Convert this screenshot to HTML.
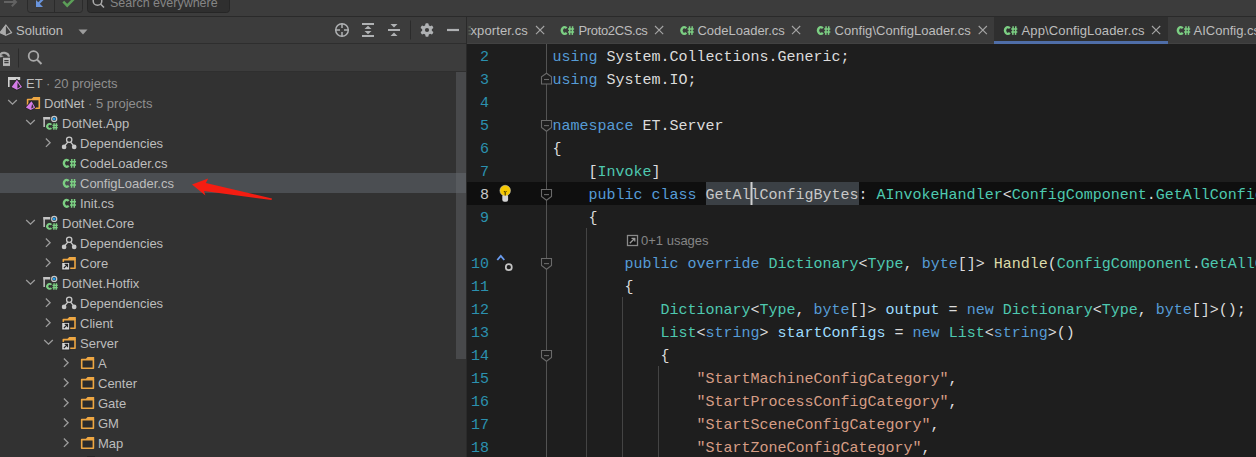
<!DOCTYPE html>
<html><head><meta charset="utf-8"><style>
*{box-sizing:border-box}
html,body{margin:0;padding:0}
body{width:1256px;height:457px;overflow:hidden;position:relative;background:#1e1e1e;font-family:"Liberation Sans",sans-serif;font-size:13px;color:#bbbbbb}
.a{position:absolute}
.row{position:absolute;left:0;width:456px;height:20px;white-space:pre;line-height:20px}
.tt{position:absolute;top:0;color:#bdbdbd}
.dim{color:#8f8f8f}
.code{font-family:"Liberation Mono",monospace;font-size:15px;white-space:pre;position:absolute;left:552px;height:23px;line-height:23px;color:#dcdcdc}
.ln{font-family:"Liberation Mono",monospace;font-size:15px;position:absolute;left:460px;width:29px;text-align:right;height:23px;line-height:23px;color:#2b91af}
.k{color:#569cd6}.ty{color:#4ec9b0}.s{color:#d69d85}.m{color:#dcdcaa}.v{color:#9cdcfe}
.tab{position:absolute;top:17px;height:26px;white-space:pre}
.tabt{position:absolute;top:1px;line-height:26px;color:#bdbdbd}
.ic{position:absolute}
</style></head><body>
<div class="a" style="left:0px;top:0px;width:1256px;height:16px;background:#3c3c3c;"></div>
<div class="a" style="left:0px;top:16px;width:1256px;height:1px;background:#2a2a2a;"></div>
<div class="a" style="left:0px;top:17px;width:466px;height:26px;background:#3c3c3c;"></div>
<div class="a" style="left:0px;top:43px;width:466px;height:1px;background:#2e2e2e;"></div>
<div class="a" style="left:0px;top:44px;width:466px;height:28px;background:#3c3c3c;"></div>
<div class="a" style="left:0px;top:71px;width:466px;height:1px;background:#2f2f2f;"></div>
<div class="a" style="left:0px;top:72px;width:466px;height:385px;background:#323232;"></div>
<div class="a" style="left:466px;top:17px;width:1px;height:440px;background:#2a2a2a;"></div>
<div class="a" style="left:467px;top:17px;width:789px;height:27px;background:#3b3b3b;"></div>
<div class="a" style="left:467px;top:44px;width:789px;height:413px;background:#1e1e1e;"></div>
<svg class="ic" style="left:0;top:0" width="1256" height="16" viewBox="0 0 1256 16"><path d="M4 2H16M11.8 -2.2L16 2L11.8 6.2" stroke="#626262" stroke-width="2" fill="none"/><rect x="27.5" y="-4" width="55" height="16.5" rx="3" fill="#3c3c3c" stroke="#2b2b2b"/><line x1="54.5" y1="0" x2="54.5" y2="12" stroke="#2b2b2b"/><path d="M44 -2L37.5 4.5" stroke="#6994dc" stroke-width="2.2"/><path d="M36 0V7H43Z" fill="#6994dc"/><path d="M63.3 1.6L67.2 5.6L74.5 -1.7" stroke="#5c9f58" stroke-width="2.5" fill="none"/><rect x="87.5" y="-4" width="142" height="16.5" rx="3" fill="#2f2f2f" stroke="#262626"/><circle cx="97.5" cy="1" r="4.3" stroke="#a9a9a9" stroke-width="1.5" fill="none"/><path d="M100.5 4L104 7.5" stroke="#a9a9a9" stroke-width="1.6"/></svg>
<div class="a" style="left:110px;top:-5px;line-height:16px;font-size:12.5px;color:#858585;white-space:pre">Search everywhere</div>
<svg class="ic" style="left:0;top:17px" width="466" height="55" viewBox="0 17 466 55"><path d="M5.9 25L0.2 32.6L5.9 35.2L11.6 32.6Z" fill="none" stroke="#ababab" stroke-width="1.2" stroke-linejoin="round"/><path d="M5.9 24.4L-0.3 32.6L5.9 35.8Z" fill="#ababab"/><path d="M78.5 29.5H87.5L83 34.5Z" fill="#9c9c9c"/><circle cx="342" cy="30" r="6.3" stroke="#afb1b3" stroke-width="1.5" fill="none"/><path d="M342 23.5V28M342 32V36.5M335.5 30H340M344 30H348.5" stroke="#afb1b3" stroke-width="1.5"/><path d="M362 24H374M362 36H374" stroke="#afb1b3" stroke-width="2"/><path d="M364.5 29L368 25.8L371.5 29ZM364.5 31L368 34.2L371.5 31Z" fill="#afb1b3"/><path d="M388 30H400" stroke="#afb1b3" stroke-width="2"/><path d="M390.5 24H397.5L394 27.5ZM390.5 36H397.5L394 32.5Z" fill="#afb1b3"/><path d="M410.5 20.5V39.5" stroke="#2b2b2b" stroke-width="1"/><g transform="translate(427,30)" fill="#afb1b3"><circle r="4.9"/><rect x="-1.6" y="-6.7" width="3.2" height="3.4" rx="0.9" transform="rotate(0)"/><rect x="-1.6" y="-6.7" width="3.2" height="3.4" rx="0.9" transform="rotate(60)"/><rect x="-1.6" y="-6.7" width="3.2" height="3.4" rx="0.9" transform="rotate(120)"/><rect x="-1.6" y="-6.7" width="3.2" height="3.4" rx="0.9" transform="rotate(180)"/><rect x="-1.6" y="-6.7" width="3.2" height="3.4" rx="0.9" transform="rotate(240)"/><rect x="-1.6" y="-6.7" width="3.2" height="3.4" rx="0.9" transform="rotate(300)"/><circle r="2.1" fill="#3c3c3c"/></g><path d="M447 30H459" stroke="#afb1b3" stroke-width="2.2"/><path d="M-0.5 56A4.9 4.9 0 0 1 9 57.5" stroke="#a9a9a9" stroke-width="2.1" fill="none"/><path d="M-1 61.5A2.6 2.6 0 0 1 3.2 57.2" stroke="#a9a9a9" stroke-width="1.6" fill="none"/><rect x="2.5" y="57.2" width="8" height="9.2" fill="#b8b8b8" stroke="#3c3c3c" stroke-width="1"/><path d="M4.3 60.6H8.6M4.3 62.6H8.6" stroke="#3c3c3c" stroke-width="1.1"/><path d="M18.5 48.5V67.5" stroke="#2b2b2b"/><circle cx="33.5" cy="56" r="4.8" stroke="#a9a9a9" stroke-width="1.8" fill="none"/><path d="M37 59.5L41.5 64" stroke="#a9a9a9" stroke-width="2"/></svg>
<div class="a" style="left:16px;top:18px;line-height:26px;color:#bdbdbd;white-space:pre">Solution</div>
<div class="a" style="left:0px;top:173px;width:466px;height:20px;background:#4b4e52;"></div>
<div class="a" style="left:456px;top:72px;width:10px;height:287px;background:rgba(108,110,116,0.38);"></div>
<div class="row" style="top:74px"><span class="tt" style="left:26px">ET<span class="dim"> · 20 projects</span></span></div>
<div class="row" style="top:94px"><span class="tt" style="left:44px">DotNet<span class="dim"> · 5 projects</span></span></div>
<div class="row" style="top:114px"><span class="tt" style="left:62px">DotNet.App</span></div>
<div class="row" style="top:134px"><span class="tt" style="left:80px">Dependencies</span></div>
<div class="row" style="top:154px"><span class="tt" style="left:80px">CodeLoader.cs</span></div>
<div class="row" style="top:174px"><span class="tt" style="left:80px">ConfigLoader.cs</span></div>
<div class="row" style="top:194px"><span class="tt" style="left:80px">Init.cs</span></div>
<div class="row" style="top:214px"><span class="tt" style="left:62px">DotNet.Core</span></div>
<div class="row" style="top:234px"><span class="tt" style="left:80px">Dependencies</span></div>
<div class="row" style="top:254px"><span class="tt" style="left:80px">Core</span></div>
<div class="row" style="top:274px"><span class="tt" style="left:62px">DotNet.Hotfix</span></div>
<div class="row" style="top:294px"><span class="tt" style="left:80px">Dependencies</span></div>
<div class="row" style="top:314px"><span class="tt" style="left:80px">Client</span></div>
<div class="row" style="top:334px"><span class="tt" style="left:80px">Server</span></div>
<div class="row" style="top:354px"><span class="tt" style="left:98px">A</span></div>
<div class="row" style="top:374px"><span class="tt" style="left:98px">Center</span></div>
<div class="row" style="top:394px"><span class="tt" style="left:98px">Gate</span></div>
<div class="row" style="top:414px"><span class="tt" style="left:98px">GM</span></div>
<div class="row" style="top:434px"><span class="tt" style="left:98px">Map</span></div>
<div class="row" style="top:454px"><span class="tt" style="left:98px">Model</span></div>
<svg class="ic" style="left:0;top:72px" width="456" height="385" viewBox="0 72 456 385"><rect x="8" y="77" width="12.2" height="3" fill="#d0d0d0"/><rect x="8" y="77" width="1.6" height="10" fill="#d0d0d0"/><path d="M16.9 79.7L11.6 87.1L16.9 89.8L22.0 87.1Z" fill="#262626" stroke="#262626" stroke-width="1.6" stroke-linejoin="round"/><path d="M16.9 79.7L11.6 87.1L16.9 89.8L22.0 87.1Z" fill="#d47ce6"/><path d="M17.5 82.2L17.4 88.39999999999999L20.4 86.8Z" fill="#2a2a2a"/><path d="M8.2 100L12.5 104.2L16.8 100" stroke="#9c9c9c" stroke-width="1.3" fill="none"/><path d="M27.6 99.5H39.3V108.2H27.6Z" fill="#2b2b2b" stroke="#eea743" stroke-width="1.6" stroke-linejoin="round"/><path d="M31.6 99.1L33.4 96.9H40.1V99.7H31.6Z" fill="#eea743"/><path d="M31.5 101.2L25.9 107.6L30.7 109.9L35.2 107.6Z" fill="#262626" stroke="#262626" stroke-width="1.6" stroke-linejoin="round"/><path d="M31.5 101.2L25.9 107.6L30.7 109.9L35.2 107.6Z" fill="#d47ce6"/><path d="M32.1 103.7L31.2 108.5L33.6 107.3Z" fill="#2a2a2a"/><path d="M26.2 120L30.5 124.2L34.8 120" stroke="#9c9c9c" stroke-width="1.3" fill="none"/><rect x="43.4" y="117" width="6.8" height="2.5" fill="#c4c4c4"/><rect x="43.4" y="117" width="1.5" height="10" fill="#c4c4c4"/><circle cx="54.2" cy="118.9" r="2.5" fill="#2b2b2b" stroke="#c8c8c8" stroke-width="1.3"/><circle cx="54.2" cy="118.9" r="1.4" fill="#1ea0f5"/><g transform="translate(46.2,123) scale(0.86,0.74)" fill="none" stroke="#7ccf83"><path d="M5.9 2.3A2.7 3.4 0 1 0 5.9 6.9" stroke-width="2.53"/><path d="M9.2 0.4L8.9 9M11.9 0.4L11.6 9M7.3 3.1H13.4M7.3 6.2H13.4" stroke-width="1.6500000000000001"/></g><path d="M45.900000000000006 138.5L50.1 142.7L45.900000000000006 146.9" stroke="#9c9c9c" stroke-width="1.3" fill="none"/><circle cx="69.2" cy="139.7" r="2.65" stroke="#c8c8c8" stroke-width="1.3" fill="none"/><path d="M67.9 142L64.4 146.2M70.5 142L74.0 146.2" stroke="#c8c8c8" stroke-width="1.2"/><circle cx="64.10000000000001" cy="146.9" r="2.35" fill="#c8c8c8"/><circle cx="74.2" cy="146.9" r="2.35" fill="#c8c8c8"/><g transform="translate(62.8,158.6) scale(0.985,1.02)" fill="none" stroke="#7ccf83"><path d="M5.9 2.3A2.7 3.4 0 1 0 5.9 6.9" stroke-width="2.3"/><path d="M9.2 0.4L8.9 9M11.9 0.4L11.6 9M7.3 3.1H13.4M7.3 6.2H13.4" stroke-width="1.5"/></g><g transform="translate(62.8,178.6) scale(0.985,1.02)" fill="none" stroke="#7ccf83"><path d="M5.9 2.3A2.7 3.4 0 1 0 5.9 6.9" stroke-width="2.3"/><path d="M9.2 0.4L8.9 9M11.9 0.4L11.6 9M7.3 3.1H13.4M7.3 6.2H13.4" stroke-width="1.5"/></g><g transform="translate(62.8,198.6) scale(0.985,1.02)" fill="none" stroke="#7ccf83"><path d="M5.9 2.3A2.7 3.4 0 1 0 5.9 6.9" stroke-width="2.3"/><path d="M9.2 0.4L8.9 9M11.9 0.4L11.6 9M7.3 3.1H13.4M7.3 6.2H13.4" stroke-width="1.5"/></g><path d="M26.2 220L30.5 224.2L34.8 220" stroke="#9c9c9c" stroke-width="1.3" fill="none"/><rect x="43.4" y="217" width="6.8" height="2.5" fill="#c4c4c4"/><rect x="43.4" y="217" width="1.5" height="10" fill="#c4c4c4"/><circle cx="54.2" cy="218.9" r="2.5" fill="#2b2b2b" stroke="#c8c8c8" stroke-width="1.3"/><circle cx="54.2" cy="218.9" r="1.4" fill="#1ea0f5"/><g transform="translate(46.2,223) scale(0.86,0.74)" fill="none" stroke="#7ccf83"><path d="M5.9 2.3A2.7 3.4 0 1 0 5.9 6.9" stroke-width="2.53"/><path d="M9.2 0.4L8.9 9M11.9 0.4L11.6 9M7.3 3.1H13.4M7.3 6.2H13.4" stroke-width="1.6500000000000001"/></g><path d="M45.900000000000006 238.5L50.1 242.7L45.900000000000006 246.9" stroke="#9c9c9c" stroke-width="1.3" fill="none"/><circle cx="69.2" cy="239.7" r="2.65" stroke="#c8c8c8" stroke-width="1.3" fill="none"/><path d="M67.9 242L64.4 246.2M70.5 242L74.0 246.2" stroke="#c8c8c8" stroke-width="1.2"/><circle cx="64.10000000000001" cy="246.9" r="2.35" fill="#c8c8c8"/><circle cx="74.2" cy="246.9" r="2.35" fill="#c8c8c8"/><path d="M45.900000000000006 258.5L50.1 262.7L45.900000000000006 266.9" stroke="#9c9c9c" stroke-width="1.3" fill="none"/><path d="M63.3 259.6H75.0V268.2H63.3Z" fill="#2b2b2b" stroke="#eea743" stroke-width="1.6" stroke-linejoin="round"/><path d="M67.3 259.2L69.1 257H75.8V259.8H67.3Z" fill="#eea743"/><rect x="61.7" y="262.4" width="8" height="7.6" fill="#d6d6d6" stroke="#262626" stroke-width="1"/><path d="M63.9 268L67.5 264.4M64.7 264.4H67.5V267.2" stroke="#262626" stroke-width="1.2" fill="none"/><path d="M26.2 280L30.5 284.2L34.8 280" stroke="#9c9c9c" stroke-width="1.3" fill="none"/><rect x="43.4" y="277" width="6.8" height="2.5" fill="#c4c4c4"/><rect x="43.4" y="277" width="1.5" height="10" fill="#c4c4c4"/><circle cx="54.2" cy="278.9" r="2.5" fill="#2b2b2b" stroke="#c8c8c8" stroke-width="1.3"/><circle cx="54.2" cy="278.9" r="1.4" fill="#1ea0f5"/><g transform="translate(46.2,283) scale(0.86,0.74)" fill="none" stroke="#7ccf83"><path d="M5.9 2.3A2.7 3.4 0 1 0 5.9 6.9" stroke-width="2.53"/><path d="M9.2 0.4L8.9 9M11.9 0.4L11.6 9M7.3 3.1H13.4M7.3 6.2H13.4" stroke-width="1.6500000000000001"/></g><path d="M45.900000000000006 298.5L50.1 302.7L45.900000000000006 306.9" stroke="#9c9c9c" stroke-width="1.3" fill="none"/><circle cx="69.2" cy="299.7" r="2.65" stroke="#c8c8c8" stroke-width="1.3" fill="none"/><path d="M67.9 302L64.4 306.2M70.5 302L74.0 306.2" stroke="#c8c8c8" stroke-width="1.2"/><circle cx="64.10000000000001" cy="306.9" r="2.35" fill="#c8c8c8"/><circle cx="74.2" cy="306.9" r="2.35" fill="#c8c8c8"/><path d="M45.900000000000006 318.5L50.1 322.7L45.900000000000006 326.9" stroke="#9c9c9c" stroke-width="1.3" fill="none"/><path d="M63.3 319.6H75.0V328.2H63.3Z" fill="#2b2b2b" stroke="#eea743" stroke-width="1.6" stroke-linejoin="round"/><path d="M67.3 319.2L69.1 317H75.8V319.8H67.3Z" fill="#eea743"/><rect x="61.7" y="322.4" width="8" height="7.6" fill="#d6d6d6" stroke="#262626" stroke-width="1"/><path d="M63.9 328L67.5 324.4M64.7 324.4H67.5V327.2" stroke="#262626" stroke-width="1.2" fill="none"/><path d="M44.2 340L48.5 344.2L52.8 340" stroke="#9c9c9c" stroke-width="1.3" fill="none"/><path d="M63.3 339.6H75.0V348.2H63.3Z" fill="#2b2b2b" stroke="#eea743" stroke-width="1.6" stroke-linejoin="round"/><path d="M67.3 339.2L69.1 337H75.8V339.8H67.3Z" fill="#eea743"/><rect x="61.7" y="342.4" width="8" height="7.6" fill="#d6d6d6" stroke="#262626" stroke-width="1"/><path d="M63.9 348L67.5 344.4M64.7 344.4H67.5V347.2" stroke="#262626" stroke-width="1.2" fill="none"/><path d="M63.900000000000006 358.5L68.10000000000001 362.7L63.900000000000006 366.9" stroke="#9c9c9c" stroke-width="1.3" fill="none"/><path d="M81.7 359.6H93.4V368.2H81.7Z" fill="#2b2b2b" stroke="#eea743" stroke-width="1.6" stroke-linejoin="round"/><path d="M85.7 359.2L87.5 357H94.2V359.8H85.7Z" fill="#eea743"/><path d="M63.900000000000006 378.5L68.10000000000001 382.7L63.900000000000006 386.9" stroke="#9c9c9c" stroke-width="1.3" fill="none"/><path d="M81.7 379.6H93.4V388.2H81.7Z" fill="#2b2b2b" stroke="#eea743" stroke-width="1.6" stroke-linejoin="round"/><path d="M85.7 379.2L87.5 377H94.2V379.8H85.7Z" fill="#eea743"/><path d="M63.900000000000006 398.5L68.10000000000001 402.7L63.900000000000006 406.9" stroke="#9c9c9c" stroke-width="1.3" fill="none"/><path d="M81.7 399.6H93.4V408.2H81.7Z" fill="#2b2b2b" stroke="#eea743" stroke-width="1.6" stroke-linejoin="round"/><path d="M85.7 399.2L87.5 397H94.2V399.8H85.7Z" fill="#eea743"/><path d="M63.900000000000006 418.5L68.10000000000001 422.7L63.900000000000006 426.9" stroke="#9c9c9c" stroke-width="1.3" fill="none"/><path d="M81.7 419.6H93.4V428.2H81.7Z" fill="#2b2b2b" stroke="#eea743" stroke-width="1.6" stroke-linejoin="round"/><path d="M85.7 419.2L87.5 417H94.2V419.8H85.7Z" fill="#eea743"/><path d="M63.900000000000006 438.5L68.10000000000001 442.7L63.900000000000006 446.9" stroke="#9c9c9c" stroke-width="1.3" fill="none"/><path d="M81.7 439.6H93.4V448.2H81.7Z" fill="#2b2b2b" stroke="#eea743" stroke-width="1.6" stroke-linejoin="round"/><path d="M85.7 439.2L87.5 437H94.2V439.8H85.7Z" fill="#eea743"/><path d="M63.900000000000006 458.5L68.10000000000001 462.7L63.900000000000006 466.9" stroke="#9c9c9c" stroke-width="1.3" fill="none"/><path d="M81.7 459.6H93.4V468.2H81.7Z" fill="#2b2b2b" stroke="#eea743" stroke-width="1.6" stroke-linejoin="round"/><path d="M85.7 459.2L87.5 457H94.2V459.8H85.7Z" fill="#eea743"/><path d="M192 184.5L208.2 178.6L205.9 183L272 198.6L271.5 200L204 191.1L205.4 195.6Z" fill="#f41d12"/><path d="M87 456.5H95" stroke="#262626" stroke-width="1"/></svg>
<div class="a" style="left:467px;top:43px;width:789px;height:1px;background:#424242;"></div>
<div class="a" style="left:994px;top:17px;width:174px;height:27px;background:#2f2f2f;"></div>
<div class="a" style="left:994px;top:41px;width:174px;height:3px;background:#4f6ea8;"></div>
<div class="tab" style="left:470.5px"><span class="tabt" style="letter-spacing:0.1px">xporter.cs</span></div>
<div class="tab" style="left:578.5px"><span class="tabt" style="letter-spacing:-0.36px">Proto2CS.cs</span></div>
<div class="tab" style="left:697.4px"><span class="tabt" style="letter-spacing:0px">CodeLoader.cs</span></div>
<div class="tab" style="left:834.5px"><span class="tabt" style="letter-spacing:0.05px">Config\ConfigLoader.cs</span></div>
<div class="tab" style="left:1021.5px"><span class="tabt" style="letter-spacing:0.13px">App\ConfigLoader.cs</span></div>
<div class="tab" style="left:1193.5px"><span class="tabt" style="letter-spacing:0px">AIConfig.cs</span></div>
<svg class="ic" style="left:467px;top:17px" width="789" height="27" viewBox="467 17 789 27"><path d="M536 26L544.2 34.2M544.2 26L536 34.2" stroke="#a5a5a5" stroke-width="1.1"/><g transform="translate(560.6999999999999,25.9) scale(1.0,1.0)" fill="none" stroke="#7ccf83"><path d="M5.9 2.3A2.7 3.4 0 1 0 5.9 6.9" stroke-width="2.3"/><path d="M9.2 0.4L8.9 9M11.9 0.4L11.6 9M7.3 3.1H13.4M7.3 6.2H13.4" stroke-width="1.5"/></g><path d="M655 26L663.2 34.2M663.2 26L655 34.2" stroke="#a5a5a5" stroke-width="1.1"/><g transform="translate(680.3,25.9) scale(1.0,1.0)" fill="none" stroke="#7ccf83"><path d="M5.9 2.3A2.7 3.4 0 1 0 5.9 6.9" stroke-width="2.3"/><path d="M9.2 0.4L8.9 9M11.9 0.4L11.6 9M7.3 3.1H13.4M7.3 6.2H13.4" stroke-width="1.5"/></g><path d="M792 26L800.2 34.2M800.2 26L792 34.2" stroke="#a5a5a5" stroke-width="1.1"/><g transform="translate(816.9,25.9) scale(1.0,1.0)" fill="none" stroke="#7ccf83"><path d="M5.9 2.3A2.7 3.4 0 1 0 5.9 6.9" stroke-width="2.3"/><path d="M9.2 0.4L8.9 9M11.9 0.4L11.6 9M7.3 3.1H13.4M7.3 6.2H13.4" stroke-width="1.5"/></g><path d="M978.7 26L986.9000000000001 34.2M986.9000000000001 26L978.7 34.2" stroke="#a5a5a5" stroke-width="1.1"/><g transform="translate(1003.9,25.9) scale(1.0,1.0)" fill="none" stroke="#7ccf83"><path d="M5.9 2.3A2.7 3.4 0 1 0 5.9 6.9" stroke-width="2.3"/><path d="M9.2 0.4L8.9 9M11.9 0.4L11.6 9M7.3 3.1H13.4M7.3 6.2H13.4" stroke-width="1.5"/></g><path d="M1152 26L1160.2 34.2M1160.2 26L1152 34.2" stroke="#a5a5a5" stroke-width="1.1"/><g transform="translate(1176.8,25.9) scale(1.0,1.0)" fill="none" stroke="#7ccf83"><path d="M5.9 2.3A2.7 3.4 0 1 0 5.9 6.9" stroke-width="2.3"/><path d="M9.2 0.4L8.9 9M11.9 0.4L11.6 9M7.3 3.1H13.4M7.3 6.2H13.4" stroke-width="1.5"/></g><path d="M468.5 27H471M468.5 30.8H470.8M468.5 34H471" stroke="#6f7a6a" stroke-width="1"/></svg>
<div class="a" style="left:467px;top:182px;width:789px;height:23px;background:#0f0f0f;"></div>
<div class="a" style="left:705.5px;top:182px;width:153px;height:23px;background:#3b4045;"></div>
<div class="ln" style="top:46px;color:#2b91af">2</div>
<div class="code" style="top:46px;left:552.5px"><span class="k">using</span> System.Collections.Generic;</div>
<div class="ln" style="top:69px;color:#2b91af">3</div>
<div class="code" style="top:69px;left:552.5px"><span class="k">using</span> System.IO;</div>
<div class="ln" style="top:92px;color:#2b91af">4</div>
<div class="ln" style="top:115px;color:#2b91af">5</div>
<div class="code" style="top:115px;left:552.5px"><span class="k">namespace</span> ET.Server</div>
<div class="ln" style="top:138px;color:#2b91af">6</div>
<div class="code" style="top:138px;left:552.5px">{</div>
<div class="ln" style="top:161px;color:#2b91af">7</div>
<div class="code" style="top:161px;left:588.5px">[<span class="ty">Invoke</span>]</div>
<div class="ln" style="top:184px;color:#c8c8c8">8</div>
<div class="code" style="top:184px;left:588.5px"><span class="k">public</span> <span class="k">class</span> <span style="color:#c8c8c8">GetAllConfigBytes</span>: <span class="ty">AInvokeHandler</span>&lt;<span class="ty">ConfigComponent</span>.<span class="ty">GetAllConfigBytes</span>, <span class="ty">Dictionary</span>&lt;<span class="ty">Type</span>, <span class="k">byte</span>[]&gt;&gt;</div>
<div class="ln" style="top:207px;color:#2b91af">9</div>
<div class="code" style="top:207px;left:588.5px">{</div>
<div class="ln" style="top:253px;color:#2b91af">10</div>
<div class="code" style="top:253px;left:624.5px"><span class="k">public</span> <span class="k">override</span> <span class="ty">Dictionary</span>&lt;<span class="ty">Type</span>, <span class="k">byte</span>[]&gt; <span class="m">Handle</span>(<span class="ty">ConfigComponent</span>.<span class="ty">GetAllConfigBytes</span> args)</div>
<div class="ln" style="top:276px;color:#2b91af">11</div>
<div class="code" style="top:276px;left:624.5px">{</div>
<div class="ln" style="top:299px;color:#2b91af">12</div>
<div class="code" style="top:299px;left:660.5px"><span class="ty">Dictionary</span>&lt;<span class="ty">Type</span>, <span class="k">byte</span>[]&gt; <span class="v">output</span> = <span class="k">new</span> <span class="ty">Dictionary</span>&lt;<span class="ty">Type</span>, <span class="k">byte</span>[]&gt;();</div>
<div class="ln" style="top:322px;color:#2b91af">13</div>
<div class="code" style="top:322px;left:660.5px"><span class="ty">List</span>&lt;<span class="k">string</span>&gt; <span class="v">startConfigs</span> = <span class="k">new</span> <span class="ty">List</span>&lt;<span class="k">string</span>&gt;()</div>
<div class="ln" style="top:345px;color:#2b91af">14</div>
<div class="code" style="top:345px;left:660.5px">{</div>
<div class="ln" style="top:368px;color:#2b91af">15</div>
<div class="code" style="top:368px;left:696.5px"><span class="s">"StartMachineConfigCategory"</span>,</div>
<div class="ln" style="top:391px;color:#2b91af">16</div>
<div class="code" style="top:391px;left:696.5px"><span class="s">"StartProcessConfigCategory"</span>,</div>
<div class="ln" style="top:414px;color:#2b91af">17</div>
<div class="code" style="top:414px;left:696.5px"><span class="s">"StartSceneConfigCategory"</span>,</div>
<div class="ln" style="top:437px;color:#2b91af">18</div>
<div class="code" style="top:437px;left:696.5px"><span class="s">"StartZoneConfigCategory"</span>,</div>
<div class="a" style="left:641px;top:229px;line-height:23px;font-size:13px;color:#858585;white-space:pre">0+1 usages</div>
<svg class="ic" style="left:467px;top:43px" width="789" height="414" viewBox="467 43 789 414"><path d="M546.5 44V457" stroke="#535353" stroke-width="1"/><path d="M586.5 228V457M622.5 297V457M658.5 366V457" stroke="#444444" stroke-width="1"/><path d="M541.5 84H551.5V76.8L546.5 73.2L541.5 76.8Z" fill="#1e1e1e" stroke="#6a6a6a" stroke-width="1.1"/><path d="M544 79.5H549" stroke="#6a6a6a" stroke-width="1.1"/><path d="M541.5 120.5H551.5V127.5L546.5 131.3L541.5 127.5Z" fill="#1e1e1e" stroke="#6a6a6a" stroke-width="1.1"/><path d="M544 125.6H549" stroke="#6a6a6a" stroke-width="1.1"/><path d="M541.5 189.5H551.5V196.5L546.5 200.3L541.5 196.5Z" fill="#0f0f0f" stroke="#6a6a6a" stroke-width="1.1"/><path d="M544 194.6H549" stroke="#6a6a6a" stroke-width="1.1"/><path d="M541.5 258.5H551.5V265.5L546.5 269.3L541.5 265.5Z" fill="#1e1e1e" stroke="#6a6a6a" stroke-width="1.1"/><path d="M544 263.6H549" stroke="#6a6a6a" stroke-width="1.1"/><path d="M541.5 350.5H551.5V357.5L546.5 361.3L541.5 357.5Z" fill="#1e1e1e" stroke="#6a6a6a" stroke-width="1.1"/><path d="M544 355.6H549" stroke="#6a6a6a" stroke-width="1.1"/><rect x="502.3" y="194.5" width="5.8" height="7.2" rx="2" fill="#d4d4d4"/><circle cx="505.2" cy="190.6" r="5.3" fill="#f5c800" stroke="#d0d0d0" stroke-width="0.5"/><path d="M503.9 191L505.2 192.5L506.5 191M505.2 192.5V195.5" stroke="#3a3000" stroke-width="1" fill="none"/><path d="M497.3 260L500.8 255.8L504.3 260" stroke="#6a9cf0" stroke-width="1.8" fill="none"/><circle cx="508.8" cy="267.2" r="3" stroke="#c4c4c4" stroke-width="1.7" fill="none"/><rect x="627.5" y="235.5" width="10" height="10" fill="#141414" stroke="#8a8a8a" stroke-width="1.3"/><path d="M629.8 243.3L634.8 238.3M631.5 238.3H634.8V241.6" stroke="#9a9a9a" stroke-width="1.3" fill="none"/><rect x="750.5" y="182" width="2" height="23" fill="#d0d0d0"/></svg>
</body></html>
